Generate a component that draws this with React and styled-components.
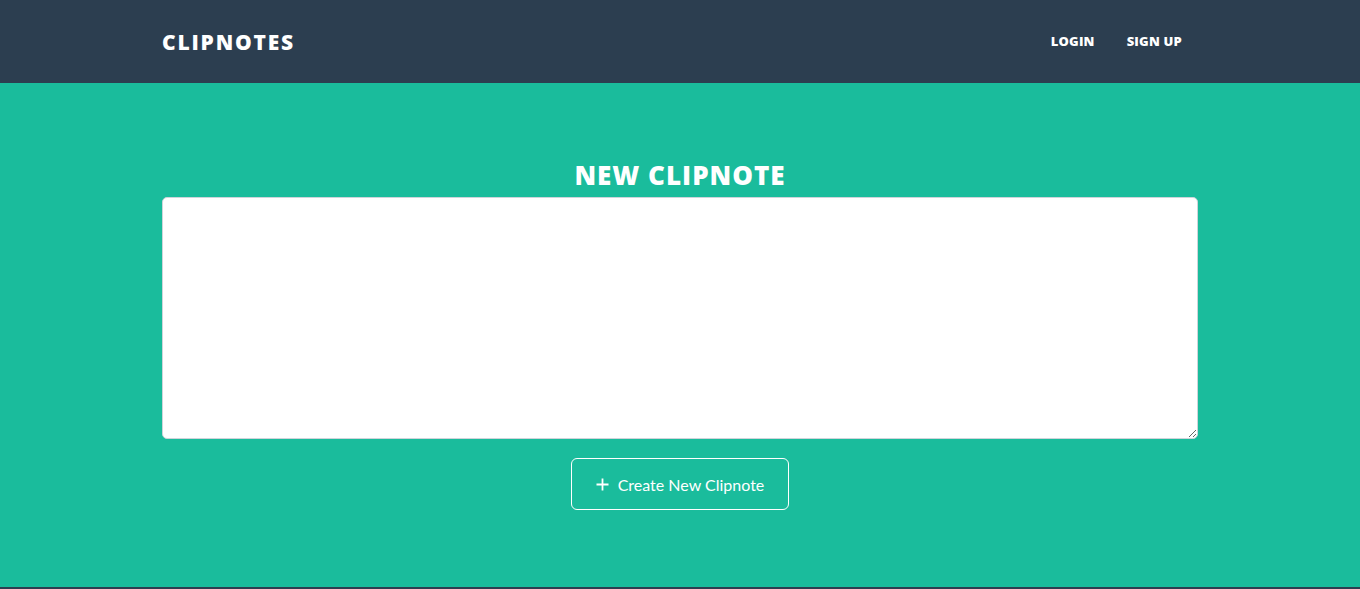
import React from "react";
import styled, { createGlobalStyle } from "styled-components";

const Global = createGlobalStyle`
  html, body { margin: 0; padding: 0; }
  body { font-family: Lato, "Open Sans", sans-serif; background: #2c3e50; }
  * { box-sizing: border-box; }
`;

const Nav = styled.nav`
  height: 83px;
  background: #2c3e50;
  display: flex;
  align-items: center;
`;

const Container = styled.div`
  width: 1036px;
  margin: 0 auto;
`;

const NavInner = styled(Container)`
  display: flex;
  align-items: center;
  justify-content: space-between;
  padding-right: 16px;
`;

const Brand = styled.a`
  font-family: "Open Sans", sans-serif;
  font-weight: 800;
  font-size: 21px;
  letter-spacing: 1.8px;
  color: #fff;
  text-transform: uppercase;
  text-decoration: none;
  margin-top: 1px;
`;

const Links = styled.div`
  display: flex;
  gap: 32px;
  margin-top: -1px;
`;

const NavLink = styled.a`
  font-family: "Open Sans", sans-serif;
  font-weight: 800;
  font-size: 13px;
  letter-spacing: 0.2px;
  color: #fff;
  text-transform: uppercase;
  text-decoration: none;
`;

const Main = styled.section`
  background: #1abc9c;
  padding: 74px 0 77px;
`;

const Heading = styled.h2`
  margin: 0 0 4px;
  text-align: center;
  font-family: "Open Sans", sans-serif;
  font-weight: 800;
  font-size: 26px;
  letter-spacing: 1px;
  line-height: 36px;
  color: #fff;
  text-transform: uppercase;
`;

const Area = styled.textarea`
  display: block;
  width: 100%;
  height: 242px;
  border: 1px solid #ced4da;
  border-radius: 5px;
  background: #fff;
  resize: vertical;
  font-family: Lato, sans-serif;
  font-size: 16px;
  padding: 6px 12px;
  outline: none;
`;

const Actions = styled.div`
  display: flex;
  justify-content: center;
  margin-top: 19px;
`;

const Button = styled.button`
  width: 218px;
  height: 52px;
  display: flex;
  align-items: center;
  justify-content: center;
  gap: 9px;
  background: transparent;
  border: 1px solid #fff;
  border-radius: 6px;
  color: #fff;
  font-family: Lato, sans-serif;
  font-size: 16px;
  cursor: pointer;
`;

export default function App() {
  return (
    <>
      <Global />
      <Nav>
        <NavInner>
          <Brand href="#">Clipnotes</Brand>
          <Links>
            <NavLink href="#">Login</NavLink>
            <NavLink href="#">Sign Up</NavLink>
          </Links>
        </NavInner>
      </Nav>
      <Main>
        <Container>
          <Heading>New Clipnote</Heading>
          <Area />
          <Actions>
            <Button>
              <svg width="13" height="13" viewBox="0 0 13 13">
                <path d="M6.5 0.5v12M0.5 6.5h12" stroke="#fff" strokeWidth="1.8" fill="none" />
              </svg>
              Create New Clipnote
            </Button>
          </Actions>
        </Container>
      </Main>
    </>
  );
}
